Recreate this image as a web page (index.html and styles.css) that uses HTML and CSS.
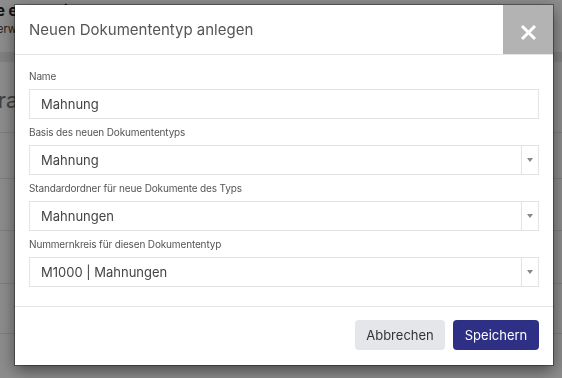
FILE: index.html
```html
<!DOCTYPE html>
<html lang="de">
<head>
  <meta charset="UTF-8">
  <title>Neuen Dokumententyp anlegen</title>
  <link rel="stylesheet" href="styles.css">
</head>
<body>
  <div class="page">
    <div class="page-head">
      <h1>Vorlage erstellt im 2027 T</h1>
      <p>Verwaltung</p>
    </div>
    <div class="page-band"></div>
    <div class="page-title">Vertrag</div>
    <div class="page-row"></div>
    <div class="page-row"></div>
    <div class="page-row"></div>
    <div class="page-row"></div>
    <div class="page-row"></div>
    <div class="page-foot">
      <div class="page-side"></div>
      <div class="page-tab">Ansicht</div>
    </div>
  </div>

  <div class="overlay">
    <div class="modal">
      <div class="modal-header">
        <h4 class="modal-title">Neuen Dokumententyp anlegen</h4>
        <button class="close" type="button" aria-label="Schließen">
          <svg width="17" height="17" viewBox="0 0 17 17">
            <path d="M2 2 L15 15 M15 2 L2 15" stroke="#fff" stroke-width="3" fill="none"/>
          </svg>
        </button>
      </div>
      <div class="modal-body">
        <label class="label" for="name">Name</label>
        <input class="field" id="name" type="text" value="Mahnung">

        <label class="label">Basis des neuen Dokumententyps</label>
        <div class="select">
          <span class="select-value">Mahnung</span>
          <span class="select-arrow"></span>
        </div>

        <label class="label">Standardordner für neue Dokumente des Typs</label>
        <div class="select">
          <span class="select-value">Mahnungen</span>
          <span class="select-arrow"></span>
        </div>

        <label class="label">Nummernkreis für diesen Dokumententyp</label>
        <div class="select">
          <span class="select-value">M1000 | Mahnungen</span>
          <span class="select-arrow"></span>
        </div>
      </div>
      <div class="modal-footer">
        <button class="btn btn-default" type="button">Abbrechen</button>
        <button class="btn btn-primary" type="button">Speichern</button>
      </div>
    </div>
  </div>
</body>
</html>
```

FILE: styles.css
```css
html,body{height: 100%;margin: 0;}
body{
  font-family: Inter, "Noto Sans", sans-serif;
  background: #fff;
  color: #333;
  overflow: hidden;
}

/* page behind the dialog */
.page-head{height: 52px;overflow: hidden;}
.page-head h1{
  margin: 2px 0 0 -52px;
  font-size: 15px;
  line-height: 18px;
  font-weight: 700;
  color: #222;
  white-space: nowrap;
}
.page-head p{margin: 2px 0 0 -10px;font-size: 11px;color: #333;}
.page-band{height: 10px;background: #eaeaea;}
.page-title{
  height: 70px;
  line-height: 76px;
  margin-left: -45px;
  font-size: 22px;
  color: #777;
  border-bottom: 1px solid #e6e6e6;
}
.page-row{height: 45px;border-bottom: 1px solid #e6e6e6;}
.page-row:nth-child(5){height: 51px;}
.page-row:nth-child(6){height: 52px;}
.page-row:nth-child(7){height: 49px;}
.page-foot{display: flex;height: 60px;}
.page-side{width: 206px;border-right: 1px solid #e0e0e0;}
.page-tab{padding: 36px 0 0 10px;font-size: 13px;color: #222;}

/* dialog */
.overlay{
  position: fixed;
  inset: 0;
  background: rgba(0,0,0,.45);
}
.modal{
  position: absolute;
  left: 15px;
  top: 5px;
  width: 538px;
  background: #fff;
  box-shadow: 0 5px 15px rgba(0,0,0,.5);
  outline: 1px solid rgba(0,0,0,.35);
}
.modal-header{
  display: flex;
  align-items: center;
  justify-content: space-between;
  height: 49px;
  border-bottom: 1px solid #e5e5e5;
}
.modal-title{
  margin: 0 0 0 14px;
  font-size: 15px;
  font-weight: 400;
  color: #555;
}
.close{
  display: flex;
  align-items: center;
  justify-content: center;
  width: 50px;
  height: 49px;
  padding: 6px 0 0;
  border: 0;
  background: #b3b3b3;
}
.modal-body{
  display: flex;
  flex-direction: column;
  padding: 13px 14px 19px;
}
.label{
  display: block;
  height: 16px;
  line-height: 16px;
  margin: 5px 0 5px;
  font-size: 10px;
  letter-spacing: -0.15px;
  color: #555;
}
.label:first-child{margin-top: 0;}
.field,.select{
  box-sizing: border-box;
  height: 30px;
  border: 1px solid #e3e3e3;
  font-family: inherit;
  font-size: 13px;
  color: #444;
}
.field{width: 100%;padding: 0 11px;outline: none;}
.select{display: flex;align-items: stretch;}
.select-value{flex: 1;padding: 0 11px;line-height: 28px;}
.select-arrow{
  width: 16px;
  border-left: 1px solid #e3e3e3;
  position: relative;
}
.select-arrow::after{
  content: "";
  position: absolute;
  left: 5px;
  top: 12px;
  border-left: 3px solid transparent;
  border-right: 3px solid transparent;
  border-top: 4px solid #888;
}
.modal-footer{
  display: flex;
  justify-content: flex-end;
  gap: 8px;
  padding: 13px 14px 15px;
  border-top: 1px solid #e5e5e5;
}
.btn{
  height: 30px;
  padding: 0 11px;
  border: 0;
  border-radius: 4px;
  font-family: inherit;
  font-size: 13px;
}
.btn-default{width: 90px;background: #e4e6e9;color: #333;}
.btn-primary{width: 86px;background: #2e3085;color: #fff;}
```
